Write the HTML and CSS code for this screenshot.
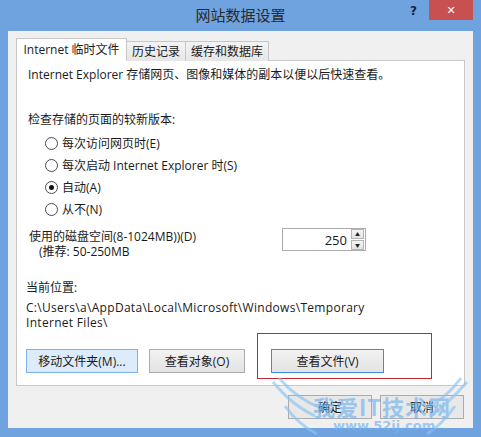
FILE: index.html
```html
<!DOCTYPE html>
<html lang="zh-CN">
<head>
    <meta charset="UTF-8">
    <title>网站数据设置</title>
    <link rel="stylesheet" href="styles.css">
</head>
<body>
    <div class="window">
        <div class="titlebar">
            <span class="title">网站数据设置</span>
            <span class="help">?</span>
            <span class="close">✕</span>
        </div>

        <div class="dialog">
            <div class="tabs">
                <div class="tab active">Internet 临时文件</div>
                <div class="tab">历史记录</div>
                <div class="tab">缓存和数据库</div>
            </div>

            <div class="panel">
                <p class="intro">Internet Explorer 存储网页、图像和媒体的副本以便以后快速查看。</p>

                <p class="label">检查存储的页面的较新版本:</p>
                <div class="radios">
                    <div class="radio"><span class="dot"></span>每次访问网页时(E)</div>
                    <div class="radio"><span class="dot"></span>每次启动 Internet Explorer 时(S)</div>
                    <div class="radio"><span class="dot on"></span>自动(A)</div>
                    <div class="radio"><span class="dot"></span>从不(N)</div>
                </div>

                <div class="disk">
                    <div class="disk-text">
                        <div>使用的磁盘空间(8-1024MB))(D)</div>
                        <div class="hint">(推荐: 50-250MB</div>
                    </div>
                    <div class="spin">
                        <span class="spin-value">250</span>
                        <span class="spin-arrows">
                            <span class="arrow">▲</span>
                            <span class="arrow">▼</span>
                        </span>
                    </div>
                </div>

                <p class="where">当前位置:</p>
                <p class="path">C:\Users\a\AppData\Local\Microsoft\Windows\Temporary<br>Internet Files\</p>

                <div class="actions">
                    <button class="btn default">移动文件夹(M)...</button>
                    <button class="btn objects">查看对象(O)</button>
                    <button class="btn focus">查看文件(V)</button>
                    <div class="mark"></div>
                </div>
            </div>

            <div class="footer">
                <button class="btn wide">确定</button>
                <button class="btn wide">取消</button>
            </div>
        </div>

        <!-- watermark over the footer -->
        <div class="watermark">
            <svg width="210" height="60" viewBox="0 0 210 60">
                <path d="M8 6 C 20 20, 30 30, 50 40 M14 2 C 26 16, 40 26, 56 32 M20 30 C 30 44, 40 52, 52 58" fill="none" stroke="#8cc4f2" stroke-width="3"/>
                <path d="M202 6 C 190 20, 180 30, 165 40 M196 2 C 186 16, 174 26, 160 32 M190 30 C 180 44, 172 52, 162 58" fill="none" stroke="#8cc4f2" stroke-width="3"/>
            </svg>
            <span class="wm-big">我爱IT技术网</span>
            <span class="wm-small">www.52ij.com</span>
        </div>
    </div>
</body>
</html>
```

FILE: styles.css
```css
body {
    margin: 0;
    background-color: #6fa3e0;
    font-family: "Segoe UI", "Open Sans", "Noto Sans CJK SC", sans-serif;
    font-size: 12px;
    color: #1a1a1a;
}

.window {
    width: 481px;
    height: 437px;
    position: relative;
    overflow: hidden;
}

.titlebar {
    height: 31px;
    display: flex;
    justify-content: center;
    position: relative;
}
.title {
    font-family: "Noto Sans CJK SC", sans-serif;
    font-size: 15px;
    line-height: 30px;
    color: #2a2a2a;
}
.help {
    position: absolute;
    left: 410px;
    top: 4px;
    font-family: "DejaVu Sans", sans-serif;
    font-weight: bold;
    font-size: 12px;
    color: #14244a;
}
.close {
    position: absolute;
    left: 429px;
    top: 0;
    width: 44px;
    height: 20px;
    background-color: #c75050;
    color: #fff;
    font-family: "DejaVu Sans", sans-serif;
    font-weight: bold;
    font-size: 11px;
    display: flex;
    justify-content: center;
    align-items: center;
}

.dialog {
    margin: 0 8px;
    height: 397px;
    background-color: #f0f0f0;
    padding: 8px 8px 0 8px;
    box-sizing: border-box;
}

.tabs {
    display: flex;
    align-items: flex-end;
    height: 22px;
    position: relative;
    z-index: 1;
}
.tab {
    height: 19px;
    padding: 0 5px;
    border: 1px solid #c7c7c7;
    border-bottom: none;
    background: linear-gradient(#f3f3f3, #e6e6e6);
    line-height: 19px;
    margin-left: -1px;
    white-space: nowrap;
}
.tab.active {
    height: 22px;
    line-height: 22px;
    background: #fff;
    margin-left: 0;
    width: 109px;
    padding: 0;
    text-align: center;
    position: relative;
    z-index: 2;
}

.panel {
    height: 326px;
    margin-top: -1px;
    background-color: #fff;
    border: 1px solid #c7c7c7;
    box-sizing: border-box;
    padding: 6px 10px 0 9px;
}
.panel p {
    margin: 0;
}

.intro {
    line-height: 16px;
    padding-left: 2px;
    white-space: nowrap;
}
.label {
    margin-top: 29px !important;
    line-height: 16px;
    padding-left: 2px;
}

.radios {
    margin-top: 4px;
    padding-left: 19px;
}
.radio {
    display: flex;
    align-items: center;
    height: 22px;
}
.dot {
    width: 11px;
    height: 11px;
    border: 1px solid #4a4a4a;
    border-radius: 50%;
    margin-right: 4px;
    display: flex;
    justify-content: center;
    align-items: center;
    background: #fff;
}
.dot.on::after {
    content: "";
    width: 5px;
    height: 5px;
    border-radius: 50%;
    background: #111;
}

.disk {
    display: flex;
    justify-content: space-between;
    margin-top: 8px;
}
.disk-text {
    line-height: 15px;
    padding-left: 3px;
    padding-top: 1px;
}
.hint {
    padding-left: 10px;
}
.spin {
    width: 84px;
    height: 23px;
    border: 1px solid #acacac;
    box-sizing: border-box;
    display: flex;
    align-items: center;
    justify-content: flex-end;
    margin-right: 88px;
}
.spin-value {
    font-size: 13px;
    padding-right: 4px;
}
.spin-arrows {
    display: flex;
    flex-direction: column;
    gap: 1px;
    margin-right: 1px;
}
.arrow {
    width: 11px;
    height: 8px;
    border: 1px solid #b5b5b5;
    background: linear-gradient(#f4f4f4, #e3e3e3);
    font-size: 5px;
    line-height: 8px;
    text-align: center;
    color: #222;
}

.where {
    margin-top: 21px !important;
    line-height: 16px;
}
.path {
    margin-top: 4px !important;
    line-height: 15px;
    letter-spacing: 0.3px;
}

.actions {
    display: flex;
    align-items: center;
    margin-top: 19px;
    position: relative;
}

.btn {
    font-family: inherit;
    font-size: 12px;
    color: #1a1a1a;
    height: 24px;
    border: 1px solid #acacac;
    background: linear-gradient(#f2f2f2, #e3e3e3);
    padding: 0;
}
.btn.default {
    width: 112px;
    background: #dcecfc;
    border-color: #7eb4ea;
}
.btn.objects {
    width: 96px;
    margin-left: 11px;
}
.btn.focus {
    width: 113px;
    margin-left: 26px;
    border-color: #3c8fd0;
}

/* red annotation box drawn over the buttons */
.mark {
    position: absolute;
    left: 231px;
    top: -16px;
    width: 175px;
    height: 46px;
    border: 1px solid #c0282d;
    box-sizing: border-box;
}

.footer {
    display: flex;
    justify-content: flex-end;
    gap: 8px;
    margin-top: 9px;
    padding-right: 1px;
}
.btn.wide {
    width: 84px;
    height: 24px;
    background: #e8e8e8;
}

.watermark {
    position: absolute;
    left: 265px;
    top: 376px;
    width: 210px;
    height: 60px;
    opacity: 0.65;
}
.watermark svg {
    position: absolute;
    left: 0;
    top: 0;
}
.wm-big {
    position: absolute;
    left: 48px;
    top: 14px;
    font-family: "Noto Sans CJK SC", sans-serif;
    font-weight: bold;
    font-size: 22px;
    color: #6fb3ef;
    letter-spacing: 1px;
}
.wm-small {
    position: absolute;
    left: 68px;
    top: 42px;
    font-family: "DejaVu Sans", sans-serif;
    font-size: 13px;
    font-weight: bold;
    color: #6fb3ef;
}
```
